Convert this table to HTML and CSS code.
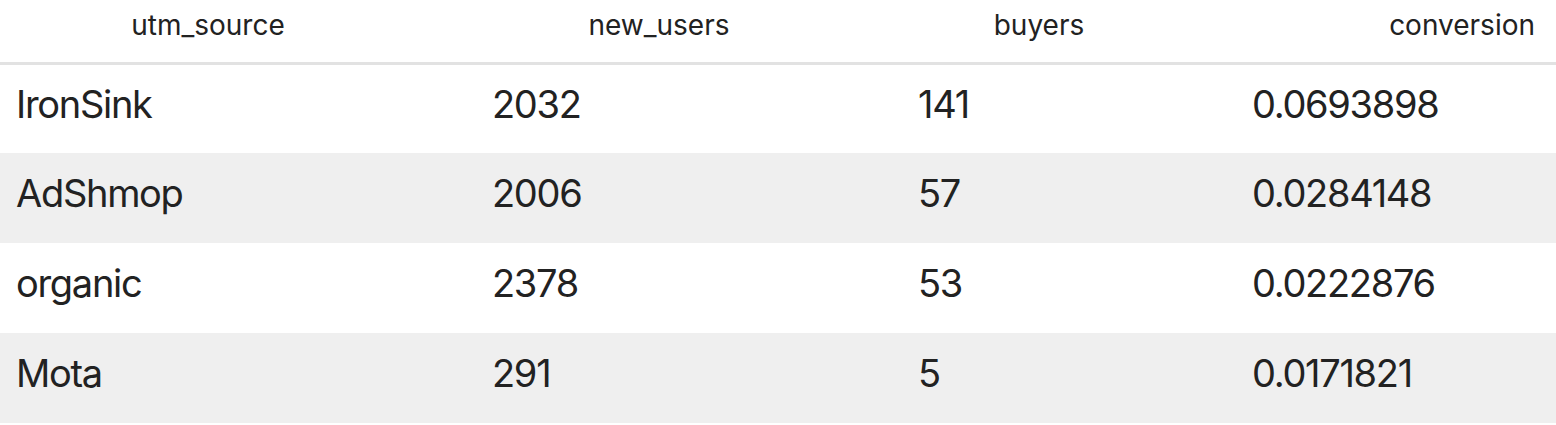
FILE: index.html
```html
<!DOCTYPE html>
<html>
<head>
<meta charset="utf-8">
<link rel="stylesheet" href="styles.css">
</head>
<body>
<table class="df">
  <colgroup>
    <col class="c1"><col class="c2"><col class="c3"><col class="c4">
  </colgroup>
  <thead>
    <tr>
      <th class="h-mid">utm_source</th>
      <th class="h-mid">new_users</th>
      <th class="h-mid">buyers</th>
      <th class="h-end">conversion</th>
    </tr>
  </thead>
  <tbody>
    <tr><td>IronSink</td><td>2032</td><td>141</td><td>0.0693898</td></tr>
    <tr class="alt"><td>AdShmop</td><td>2006</td><td>57</td><td>0.0284148</td></tr>
    <tr><td>organic</td><td>2378</td><td>53</td><td>0.0222876</td></tr>
    <tr class="alt"><td>Mota</td><td>291</td><td>5</td><td>0.0171821</td></tr>
  </tbody>
</table>
</body>
</html>
```
FILE: styles.css
```css
html, body {
  margin: 0;
  padding: 0;
  background: #ffffff;
}
.df {
  width: 1556px;
  border-collapse: collapse;
  table-layout: fixed;
  font-family: Inter, "Liberation Sans", sans-serif;
  color: #222222;
}
.c1 { width: 476px; }
.c2 { width: 426px; }
.c3 { width: 334px; }
.c4 { width: 320px; }
.df th {
  height: 63px;
  box-sizing: border-box;
  padding: 0 60px 12px 0;
  font-size: 28px;
  font-weight: 400;
  border-bottom: 3px solid #e2e2e2;
  vertical-align: middle;
}
.df th.h-mid { text-align: center; }
.df th.h-end { text-align: right; padding-right: 21px; }
.df td {
  height: 90px;
  box-sizing: border-box;
  padding: 0 0 10px 16px;
  font-size: 38px;
  letter-spacing: -1.3px;
  vertical-align: middle;
  text-align: left;
}
.df tr.alt td { background: #efefef; }
```
